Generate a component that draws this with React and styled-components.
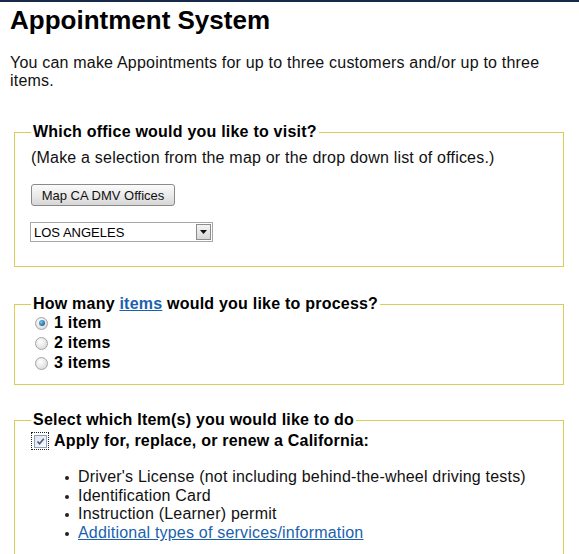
import React from "react";
import styled, { createGlobalStyle } from "styled-components";

const Global = createGlobalStyle`
  html, body { margin: 0; padding: 0; background: #fff; }
  body { font-family: "Liberation Sans", Arial, sans-serif; color: #000; }
`;

const Page = styled.div`
  border-top: 2px solid #17284a;
  padding: 0 10px;
  width: 579px;
  box-sizing: border-box;
`;

const Title = styled.h1`
  margin: 3px 0 0;
  font-size: 26px;
  line-height: 30px;
  font-weight: bold;
  color: #000;
`;

const Intro = styled.p`
  margin: 19px 0 0;
  font-size: 16px;
  line-height: 18px;
  letter-spacing: 0.2px;
  color: #111;
`;

const Box = styled.fieldset`
  margin: ${(p) => p.$top}px 0 0 4px;
  width: 550px;
  box-sizing: border-box;
  border: 1px solid #ddcd55;
  padding: 0 16px ${(p) => p.$bottom}px 16px;
  min-inline-size: 0;
`;

const Legend = styled.legend`
  padding: 0 2px;
  margin-left: 0;
  font-size: 16px;
  line-height: 18px;
  font-weight: bold;
  letter-spacing: 0.22px;
  color: #000;
`;

const Link = styled.a`
  color: #1a62ad;
  text-decoration: underline;
  cursor: pointer;
`;

const Note = styled.div`
  margin-top: 8px;
  font-size: 16px;
  line-height: 18px;
  letter-spacing: 0.2px;
  color: #111;
`;

const MapButton = styled.button`
  display: block;
  margin-top: 17px;
  height: 22px;
  width: 144px;
  padding: 0;
  font-family: "Liberation Sans", Arial, sans-serif;
  font-size: 13px;
  color: #111;
  border: 1px solid #8a8a8a;
  border-radius: 3px;
  background: linear-gradient(#fbfbfb, #e9e9e9 55%, #d6d6d6);
`;

const SelectBox = styled.div`
  margin-top: 16px;
  margin-left: -1px;
  width: 183px;
  height: 20px;
  box-sizing: border-box;
  border: 1px solid #a6a6a6;
  background: #fff;
  display: flex;
  align-items: center;
  justify-content: space-between;
  padding: 0 1px 0 3px;
`;

const SelectText = styled.span`
  font-size: 13px;
  color: #000;
`;

const ArrowBtn = styled.span`
  width: 15px;
  height: 16px;
  box-sizing: border-box;
  border: 1px solid #8c8c8c;
  background: linear-gradient(#f4f4f4, #d8d8d8);
  display: flex;
  align-items: center;
  justify-content: center;
`;

const RadioRow = styled.label`
  display: flex;
  align-items: center;
  height: 20px;
  font-size: 16px;
  font-weight: bold;
  letter-spacing: 0.2px;
  color: #000;
`;

const Radio = styled.span`
  width: 11px;
  height: 11px;
  margin: 0 6px 0 4px;
  border-radius: 50%;
  border: 1px solid #a4a4a4;
  background: radial-gradient(circle at 40% 35%, #ffffff, #e4e4e4 60%, #cfcfcf);
  display: flex;
  align-items: center;
  justify-content: center;
  flex: none;
`;

const Dot = styled.span`
  width: 6px;
  height: 6px;
  border-radius: 50%;
  background: radial-gradient(circle at 35% 35%, #7fc4ea, #1b6ea6 70%, #134f7c);
`;

const CheckRow = styled.label`
  display: flex;
  align-items: center;
  margin-top: 3px;
  height: 18px;
  font-size: 16px;
  font-weight: bold;
  letter-spacing: 0.2px;
  color: #000;
`;

const FocusRing = styled.span`
  width: 18px;
  height: 18px;
  box-sizing: border-box;
  border: 1px dotted #222;
  display: flex;
  align-items: center;
  justify-content: center;
  margin-right: 5px;
  flex: none;
`;

const Check = styled.span`
  width: 13px;
  height: 13px;
  box-sizing: border-box;
  border: 1px solid #8fa2bd;
  background: linear-gradient(135deg, #dfe4ec, #fbfbfd);
  display: flex;
  align-items: center;
  justify-content: center;
`;

const List = styled.ul`
  margin: 18px 0 0;
  padding-left: 47px;
  font-size: 16px;
  line-height: 18.7px;
  letter-spacing: 0.2px;
  color: #111;
  list-style: none;
`;

const Item = styled.li`
  position: relative;
  &::before {
    content: "";
    position: absolute;
    left: -13px;
    top: 8px;
    width: 4px;
    height: 4px;
    border-radius: 50%;
    background: #222;
  }
`;

export default function App() {
  return (
    <>
      <Global />
      <Page>
        <Title>Appointment System</Title>
        <Intro>
          You can make Appointments for up to three customers and/or up to three items.
        </Intro>

        <Box $top={33} $bottom={24}>
          <Legend>Which office would you like to visit?</Legend>
          <Note>(Make a selection from the map or the drop down list of offices.)</Note>
          <MapButton type="button">Map CA DMV Offices</MapButton>
          <SelectBox>
            <SelectText>LOS ANGELES</SelectText>
            <ArrowBtn>
              <svg width="7" height="4" viewBox="0 0 7 4">
                <path d="M0 0H7L3.5 4Z" fill="#111" />
              </svg>
            </ArrowBtn>
          </SelectBox>
        </Box>

        <Box $top={28} $bottom={11}>
          <Legend>
            How many <Link>items</Link> would you like to process?
          </Legend>
          <RadioRow>
            <Radio>
              <Dot />
            </Radio>
            1 item
          </RadioRow>
          <RadioRow>
            <Radio />2 items
          </RadioRow>
          <RadioRow>
            <Radio />3 items
          </RadioRow>
        </Box>

        <Box $top={26} $bottom={20}>
          <Legend>Select which Item(s) you would like to do</Legend>
          <CheckRow>
            <FocusRing>
              <Check>
                <svg width="9" height="9" viewBox="0 0 9 9">
                  <path d="M1.5 4.5L3.5 6.8L7.8 1.8" stroke="#4b5a86" strokeWidth="1.6" fill="none" />
                </svg>
              </Check>
            </FocusRing>
            Apply for, replace, or renew a California:
          </CheckRow>
          <List>
            <Item>Driver's License (not including behind-the-wheel driving tests)</Item>
            <Item>Identification Card</Item>
            <Item>Instruction (Learner) permit</Item>
            <Item>
              <Link>Additional types of services/information</Link>
            </Item>
          </List>
        </Box>
      </Page>
    </>
  );
}
